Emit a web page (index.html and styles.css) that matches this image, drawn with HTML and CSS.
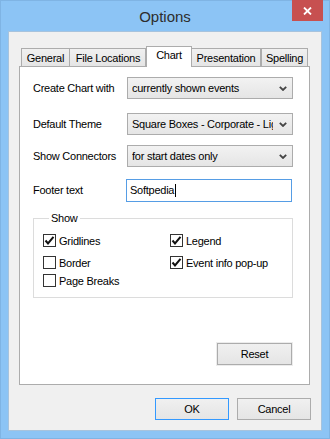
FILE: index.html
```html
<!DOCTYPE html>
<html>
<head>
<meta charset="utf-8">
<link rel="stylesheet" href="styles.css">
</head>
<body>
<div class="window">
  <div class="titlebar">
    <span class="title">Options</span>
    <div class="close">
      <svg width="9" height="8" viewBox="0 0 9 8"><path d="M1 0.5 L8 7.5 M8 0.5 L1 7.5" stroke="#fff" stroke-width="1.8" fill="none"/></svg>
    </div>
  </div>
  <div class="client">
    <div class="tabs">
      <div class="tab t-general">General</div>
      <div class="tab t-files">File Locations</div>
      <div class="tab t-chart active">Chart</div>
      <div class="tab t-pres">Presentation</div>
      <div class="tab t-spell">Spelling</div>
    </div>
    <div class="panel">
      <div class="row r1">
        <span class="label">Create Chart with</span>
        <div class="select"><span class="sel-text">currently shown events</span><svg class="chev" width="8" height="5" viewBox="0 0 8 5"><path d="M0.8 0.8 L4 4 L7.2 0.8" stroke="#444" stroke-width="1.8" fill="none"/></svg></div>
      </div>
      <div class="row r2">
        <span class="label">Default Theme</span>
        <div class="select"><span class="sel-text">Square Boxes - Corporate - Light</span><svg class="chev" width="8" height="5" viewBox="0 0 8 5"><path d="M0.8 0.8 L4 4 L7.2 0.8" stroke="#444" stroke-width="1.8" fill="none"/></svg></div>
      </div>
      <div class="row r3">
        <span class="label">Show Connectors</span>
        <div class="select"><span class="sel-text">for start dates only</span><svg class="chev" width="8" height="5" viewBox="0 0 8 5"><path d="M0.8 0.8 L4 4 L7.2 0.8" stroke="#444" stroke-width="1.8" fill="none"/></svg></div>
      </div>
      <div class="row r4">
        <span class="label">Footer text</span>
        <div class="input"><span>Softpedia</span><span class="caret"></span></div>
      </div>
      <fieldset class="group">
        <legend>Show</legend>
        <div class="checks">
          <div class="check c1"><span class="box on"><svg width="11" height="11" viewBox="0 0 11 11"><path d="M1.5 5.5 L4 8.5 L9.5 1.8" stroke="#111" stroke-width="2" fill="none"/></svg></span>Gridlines</div>
          <div class="check c1"><span class="box on"><svg width="11" height="11" viewBox="0 0 11 11"><path d="M1.5 5.5 L4 8.5 L9.5 1.8" stroke="#111" stroke-width="2" fill="none"/></svg></span>Legend</div>
          <div class="check c2"><span class="box"></span>Border</div>
          <div class="check c2"><span class="box on"><svg width="11" height="11" viewBox="0 0 11 11"><path d="M1.5 5.5 L4 8.5 L9.5 1.8" stroke="#111" stroke-width="2" fill="none"/></svg></span>Event info pop-up</div>
          <div class="check c3"><span class="box"></span>Page Breaks</div>
        </div>
      </fieldset>
      <div class="btn reset">Reset</div>
    </div>
    <div class="buttons">
      <div class="btn ok">OK</div>
      <div class="btn">Cancel</div>
    </div>
  </div>
</div>
</body>
</html>
```
FILE: styles.css
```css
* { box-sizing: border-box; }
html, body { margin: 0; padding: 0; }
body {
  width: 330px;
  height: 439px;
  background: #8cc4f5;
  font-family: "Liberation Sans", Arial, sans-serif;
  font-size: 11px;
  letter-spacing: -0.25px;
  color: #000;
  overflow: hidden;
}
.window {
  width: 330px;
  height: 439px;
  background: #8cc4f5;
  border: 1px solid #7fb4e4;
  display: flex;
  flex-direction: column;
  padding: 0 7px 7px 7px;
}
.titlebar {
  height: 30px;
  position: relative;
  display: flex;
  justify-content: center;
  align-items: center;
}
.title {
  font-size: 15px;
  color: #2d2d2d;
  letter-spacing: 0;
}
.close {
  position: absolute;
  top: -1px;
  right: -1px;
  width: 31px;
  height: 21px;
  background: #c75050;
  display: flex;
  align-items: center;
  justify-content: center;
}
.client {
  flex: 1;
  background: #f0f0f0;
  border: 1px solid #a7c3dd;
  padding: 14px 11px 10px 10px;
  display: flex;
  flex-direction: column;
}
.tabs {
  height: 20px;
  display: flex;
  align-items: flex-end;
  padding-left: 2px;
  position: relative;
  z-index: 2;
}
.tab {
  height: 18px;
  border: 1px solid #acacac;
  border-bottom: none;
  background: linear-gradient(#f0f0f0, #e5e5e5);
  display: flex;
  align-items: center;
  justify-content: center;
  padding-top: 1px;
}
.t-general { width: 49px; }
.t-files { border-left: none; width: 76px; padding-left: 1px; }
.t-chart { width: 46px; }
.t-pres { border-left: none; width: 69px; }
.t-spell { width: 47px; }
.tab.active {
  height: 21px;
  margin-bottom: -1px;
  background: #fff;
  align-items: flex-start;
  padding-top: 2px;
}
.panel {
  height: 319px;
  background: #fff;
  border: 1px solid #acacac;
  padding: 10px 16px 19px 13px;
  display: flex;
  flex-direction: column;
}
.row {
  display: flex;
  align-items: center;
  height: 22px;
}
.r2 { margin-top: 14px; }
.r3 { margin-top: 10px; }
.r4 { margin-top: 12px; }
.label {
  width: 94px;
  flex: none;
}
.select {
  width: 166px;
  height: 22px;
  border: 1px solid #acacac;
  background: linear-gradient(#f2f2f2, #e5e5e5);
  display: flex;
  align-items: center;
  padding: 0 5px 0 4px;
  overflow: hidden;
}
.sel-text {
  flex: 1;
  white-space: nowrap;
  overflow: hidden;
}
.chev { flex: none; margin-left: 6px; }
.input {
  width: 166px;
  height: 23px;
  margin-left: -1px;
  border: 1px solid #569de5;
  background: #fff;
  display: flex;
  align-items: center;
  padding-left: 3px;
}
.caret {
  width: 1px;
  height: 13px;
  background: #000;
  margin-left: 1px;
}
.group {
  margin: 11px 0 0 0;
  width: 260px;
  border: 1px solid #dcdcdc;
  padding: 9px 0 10px 9px;
}
.group legend {
  padding: 0 2px;
  margin-left: 6px;
  line-height: 13px;
}
.checks {
  display: grid;
  grid-template-columns: 127px 1fr;
}
.check {
  display: flex;
  align-items: center;
  height: 13px;
  white-space: nowrap;
}
.c2 { margin-top: 9px; }
.c3 { margin-top: 5px; }
.box {
  width: 13px;
  height: 13px;
  border: 1px solid #333;
  background: #fff;
  margin-right: 3px;
  flex: none;
  display: flex;
  align-items: center;
  justify-content: center;
}
.btn {
  width: 74px;
  height: 22px;
  border: 1px solid #acacac;
  background: linear-gradient(#f0f0f0, #e5e5e5);
  display: flex;
  align-items: center;
  justify-content: center;
}
.reset {
  margin-top: auto;
  align-self: flex-end;
  margin-right: 1px;
  width: 75px;
  box-shadow: 0 0 0 1px #ececec;
}
.buttons {
  margin-top: 13px;
  display: flex;
  justify-content: flex-end;
  gap: 8px;
  margin-right: -1px;
}
.ok { border-color: #3399ff; }
```
